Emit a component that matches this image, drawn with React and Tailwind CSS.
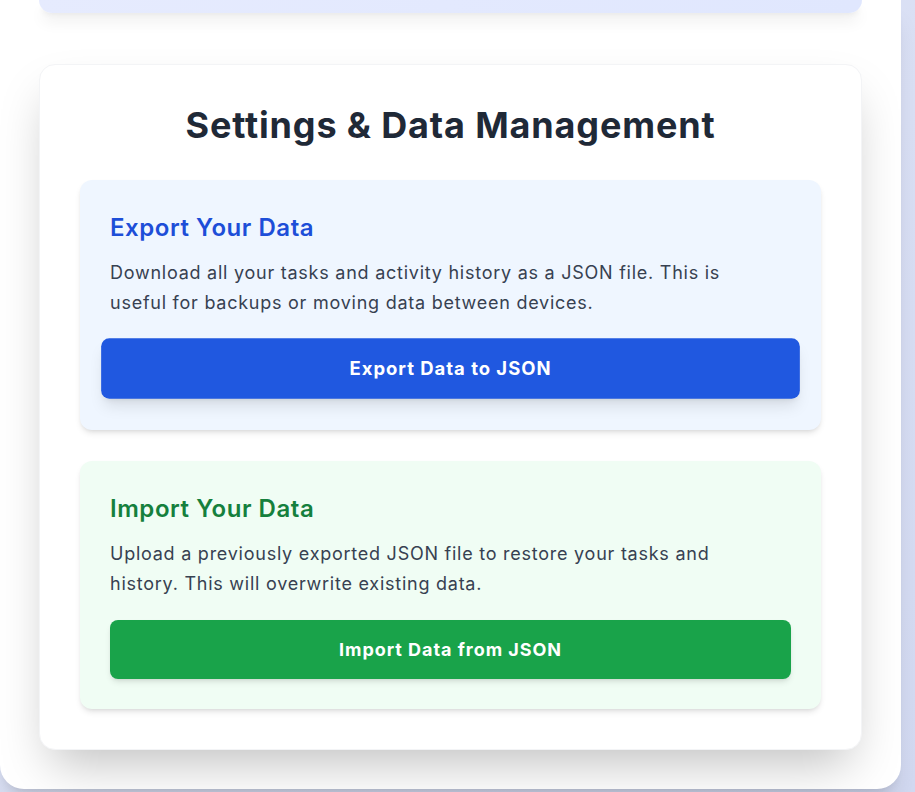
export default function App() {
  return (
    <div
      className="min-h-screen bg-gradient-to-br from-[#e2e7f8] to-[#d2d9f1] [font-optical-sizing:none] [font-variation-settings:'opsz'_14]"
      style={{ fontFamily: "Inter, 'Noto Sans', sans-serif" }}
    >
      <div className="w-[901px] h-[789px] bg-white rounded-b-[24px] px-[39px] shadow-xl">
        <div className="h-[13px] rounded-b-2xl bg-gradient-to-r from-[#e6ebfe] to-[#e0e7fe] shadow-lg" />
        <div className="mt-[51px] rounded-2xl bg-white border border-gray-100 shadow-2xl px-10 pt-10 pb-10">
          <h2 className="text-4xl leading-10 font-bold text-center text-[#1f2937] mb-[35px] tracking-[0.85px]">
            Settings &amp; Data Management
          </h2>

          <div className="rounded-xl bg-[#eff6ff] shadow-md px-[30px] pt-8 pb-8">
            <h3 className="text-2xl leading-8 font-semibold text-[#1d4ed8] mb-[14px] tracking-[0.55px]">
              Export Your Data
            </h3>
            <p className="max-w-[660px] text-lg leading-[30px] text-[#374151] mb-[21px] tracking-[0.75px]">
              Download all your tasks and activity history as a JSON file. This is useful for backups or moving data between devices.
            </p>
            <button className="w-full h-[59px] rounded-lg bg-[#2058e0] text-white text-lg font-bold tracking-[0.95px] shadow-lg scale-[1.026]">
              Export Data to JSON
            </button>
          </div>

          <div className="mt-[31px] rounded-xl bg-[#f0fdf4] shadow-md px-[30px] pt-8 pb-[30px]">
            <h3 className="text-2xl leading-8 font-semibold text-[#15803d] mb-[14px] tracking-[0.55px]">
              Import Your Data
            </h3>
            <p className="max-w-[660px] text-lg leading-[30px] text-[#374151] mb-[21px] tracking-[0.75px]">
              Upload a previously exported JSON file to restore your tasks and history. This will overwrite existing data.
            </p>
            <button className="w-full h-[59px] rounded-lg bg-[#19a34a] text-white text-lg font-bold tracking-[0.95px] shadow-md">
              Import Data from JSON
            </button>
          </div>
        </div>
      </div>
    </div>
  );
}
